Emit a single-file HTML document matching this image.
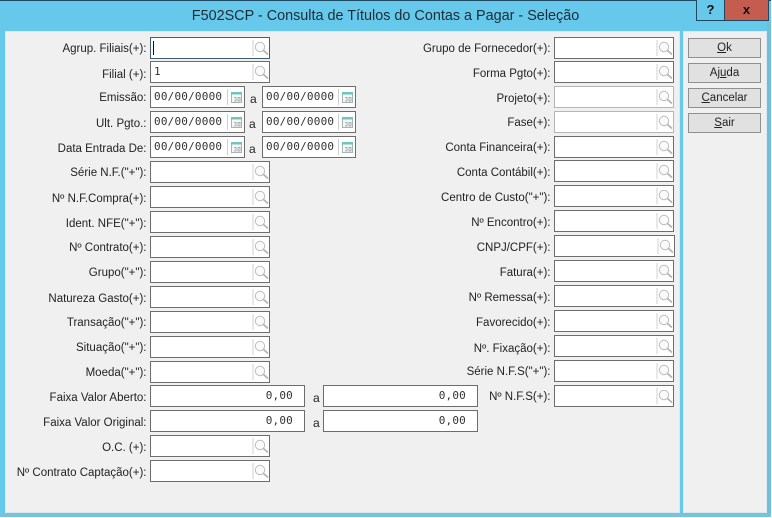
<!DOCTYPE html>
<html><head><meta charset="utf-8"><title>F502SCP</title>
<style>
*{box-sizing:border-box}
html,body{margin:0;padding:0}
body{width:772px;height:518px;position:relative;overflow:hidden;background:#66c9eb;font-family:"Liberation Sans",sans-serif;color:#222}
.top{position:absolute;left:0;top:0;width:772px;height:1px;background:#1f4a63}
.title{position:absolute;left:0;top:6px;width:771px;text-align:center;font-size:14.4px;line-height:21px;color:#1d2c35}
.help,.close{position:absolute;top:0;height:21px;border:1px solid #20485e;border-top:0;text-align:center;font:bold 13px/19px "Liberation Sans",sans-serif;color:#111}
.help{left:696px;width:28px;background:#66c9eb;border-right:0}
.close{left:724px;width:45px;background:#c45c50}
.pane{position:absolute;top:31px;height:482px;background:#f0f0f0;border:1px solid #dbe8ee}
.p1{left:5px;width:675px}.p2{left:683px;width:84px}
.bot{position:absolute;left:0;top:513px;width:772px;height:4px;background:#75c3dc}
.botw{position:absolute;left:0;top:517px;width:772px;height:1px;background:#fff}
.right{position:absolute;left:767px;top:21px;width:4px;height:497px;background:#70c0da}
.rightw{position:absolute;left:771px;top:0;width:1px;height:518px;background:#fff}
.lb{position:absolute;height:24px;line-height:24px;font-size:11.5px;text-align:right;white-space:nowrap;color:#222}
.l{left:0;width:146.5px}.r{left:400px;width:150.5px}
.f{position:absolute;height:22px;background:#fff;border:1px solid #6d6d6d;font:11px/19px "DejaVu Sans Mono",monospace;color:#333;letter-spacing:.2px;padding-left:3px}
.fl{left:150px;width:120px}.fr{left:554px;width:120px}
.d1{left:150px;width:95px}.d2{left:262px;width:94px}
.v1{left:150px;width:155px}.v2{left:323px;width:155px}
.v1,.v2{text-align:right;padding-right:11px}
.dis{border-color:#b5b5b5}
.f svg{position:absolute;right:0;top:0}
.a{position:absolute;font-size:12px;line-height:16px;color:#222}
.cur{position:absolute;left:2px;top:3px;width:1px;height:14px;background:#111}
.b{position:absolute;left:688px;width:73px;height:20px;background:#e1e1e1;border:1px solid #8f8f8f;text-align:center;font-size:11.5px;line-height:19px;color:#222}
.b u{text-decoration:underline}
</style></head><body>
<svg width="0" height="0" style="position:absolute"><defs>
<symbol id="m" viewBox="0 0 17 20"><path d="M1 2V18" stroke="#d2d2d2" fill="none"/><circle cx="8" cy="9" r="4.7" fill="#fafafa" stroke="#bcbcbc"/><path d="M11.5 12.5L16 16.5" stroke="#b4b4b4" stroke-width="1.8" fill="none"/></symbol>
<symbol id="c" viewBox="0 0 17 20"><path d="M.5 2V18" stroke="#cfcfcf" fill="none"/><rect x="4.5" y="5.5" width="10" height="10" fill="#f4f7f6" stroke="#a3b5b5"/><rect x="4" y="5" width="11" height="2.5" fill="#6fc4be"/><path d="M7 10.5h2v3.5H7M11 10.5h2v3.5h-2z" fill="none" stroke="#9a9a9a" stroke-width=".8"/></symbol>
</defs></svg>
<div class="top"></div>
<div class="title">F502SCP - Consulta de Títulos do Contas a Pagar - Seleção</div>
<div class="help">?</div><div class="close">x</div>
<div class="pane p1"></div><div class="pane p2"></div>
<div class="right"></div><div class="bot"></div><div class="botw"></div><div class="rightw"></div>

<div class="lb l" style="top:37px">Agrup. Filiais(+):</div>
<div class="f fl" style="top:37px;border-color:#3f5f70"><span class="cur"></span><svg width="17" height="20"><use href="#m"/></svg></div>
<div class="lb l" style="top:63px">Filial (+):</div>
<div class="f fl" style="top:61px">1<svg width="17" height="20"><use href="#m"/></svg></div>

<div class="lb l" style="top:86px">Emissão:</div>
<div class="f d1" style="top:86px">00/00/0000<svg width="17" height="20"><use href="#c"/></svg></div>
<div class="a" style="left:250px;top:91px">a</div>
<div class="f d2" style="top:86px">00/00/0000<svg width="17" height="20"><use href="#c"/></svg></div>
<div class="lb l" style="top:112px">Ult. Pgto.:</div>
<div class="f d1" style="top:111px">00/00/0000<svg width="17" height="20"><use href="#c"/></svg></div>
<div class="a" style="left:249px;top:116px">a</div>
<div class="f d2" style="top:111px">00/00/0000<svg width="17" height="20"><use href="#c"/></svg></div>
<div class="lb l" style="top:137px">Data Entrada De:</div>
<div class="f d1" style="top:136px">00/00/0000<svg width="17" height="20"><use href="#c"/></svg></div>
<div class="a" style="left:249px;top:141px">a</div>
<div class="f d2" style="top:136px">00/00/0000<svg width="17" height="20"><use href="#c"/></svg></div>

<div class="lb l" style="top:161px">Série N.F.("+"):</div>
<div class="f fl" style="top:161px"><svg width="17" height="20"><use href="#m"/></svg></div>
<div class="lb l" style="top:187px">Nº N.F.Compra(+):</div>
<div class="f fl" style="top:186px"><svg width="17" height="20"><use href="#m"/></svg></div>
<div class="lb l" style="top:212px">Ident. NFE("+"):</div>
<div class="f fl" style="top:211px"><svg width="17" height="20"><use href="#m"/></svg></div>
<div class="lb l" style="top:236px">Nº Contrato(+):</div>
<div class="f fl" style="top:236px"><svg width="17" height="20"><use href="#m"/></svg></div>
<div class="lb l" style="top:261px">Grupo("+"):</div>
<div class="f fl" style="top:261px"><svg width="17" height="20"><use href="#m"/></svg></div>
<div class="lb l" style="top:287px">Natureza Gasto(+):</div>
<div class="f fl" style="top:286px"><svg width="17" height="20"><use href="#m"/></svg></div>
<div class="lb l" style="top:311px">Transação("+"):</div>
<div class="f fl" style="top:311px"><svg width="17" height="20"><use href="#m"/></svg></div>
<div class="lb l" style="top:336px">Situação("+"):</div>
<div class="f fl" style="top:336px"><svg width="17" height="20"><use href="#m"/></svg></div>
<div class="lb l" style="top:361px">Moeda("+"):</div>
<div class="f fl" style="top:361px"><svg width="17" height="20"><use href="#m"/></svg></div>

<div class="lb l" style="top:386px">Faixa Valor Aberto:</div>
<div class="f v1" style="top:385px">0,00</div>
<div class="a" style="left:313px;top:390px">a</div>
<div class="f v2" style="top:385px">0,00</div>
<div class="lb l" style="top:411px">Faixa Valor Original:</div>
<div class="f v1" style="top:410px">0,00</div>
<div class="a" style="left:313px;top:415px">a</div>
<div class="f v2" style="top:410px">0,00</div>
<div class="lb l" style="top:436px">O.C. (+):</div>
<div class="f fl" style="top:435px"><svg width="17" height="20"><use href="#m"/></svg></div>
<div class="lb l" style="top:461px">Nº Contrato Captação(+):</div>
<div class="f fl" style="top:460px"><svg width="17" height="20"><use href="#m"/></svg></div>

<div class="lb r" style="top:37px">Grupo de Fornecedor(+):</div>
<div class="f fr" style="top:37px"><svg width="17" height="20"><use href="#m"/></svg></div>
<div class="lb r" style="top:62px">Forma Pgto(+):</div>
<div class="f fr" style="top:61px"><svg width="17" height="20"><use href="#m"/></svg></div>
<div class="lb r" style="top:87px">Projeto(+):</div>
<div class="f fr dis" style="top:86px"><svg width="17" height="20"><use href="#m"/></svg></div>
<div class="lb r" style="top:111px">Fase(+):</div>
<div class="f fr dis" style="top:111px"><svg width="17" height="20"><use href="#m"/></svg></div>
<div class="lb r" style="top:136px">Conta Financeira(+):</div>
<div class="f fr" style="top:136px"><svg width="17" height="20"><use href="#m"/></svg></div>
<div class="lb r" style="top:161px">Conta Contábil(+):</div>
<div class="f fr" style="top:160px"><svg width="17" height="20"><use href="#m"/></svg></div>
<div class="lb r" style="top:186px">Centro de Custo("+"):</div>
<div class="f fr" style="top:185px"><svg width="17" height="20"><use href="#m"/></svg></div>
<div class="lb r" style="top:211px">Nº Encontro(+):</div>
<div class="f fr" style="top:210px"><svg width="17" height="20"><use href="#m"/></svg></div>
<div class="lb r" style="top:236px">CNPJ/CPF(+):</div>
<div class="f fr" style="top:235px;width:121px"><svg width="17" height="20"><use href="#m"/></svg></div>
<div class="lb r" style="top:261px">Fatura(+):</div>
<div class="f fr" style="top:260px"><svg width="17" height="20"><use href="#m"/></svg></div>
<div class="lb r" style="top:286px">Nº Remessa(+):</div>
<div class="f fr" style="top:285px"><svg width="17" height="20"><use href="#m"/></svg></div>
<div class="lb r" style="top:311px">Favorecido(+):</div>
<div class="f fr" style="top:310px"><svg width="17" height="20"><use href="#m"/></svg></div>
<div class="lb r" style="top:337px">Nº. Fixação(+):</div>
<div class="f fr" style="top:335px"><svg width="17" height="20"><use href="#m"/></svg></div>
<div class="lb r" style="top:360px">Série N.F.S("+"):</div>
<div class="f fr" style="top:360px"><svg width="17" height="20"><use href="#m"/></svg></div>
<div class="lb r" style="top:385px">Nº N.F.S(+):</div>
<div class="f fr" style="top:385px"><svg width="17" height="20"><use href="#m"/></svg></div>

<div class="b" style="top:38px"><u>O</u>k</div>
<div class="b" style="top:63px">Aj<u>u</u>da</div>
<div class="b" style="top:88px"><u>C</u>ancelar</div>
<div class="b" style="top:113px"><u>S</u>air</div>
</body></html>
